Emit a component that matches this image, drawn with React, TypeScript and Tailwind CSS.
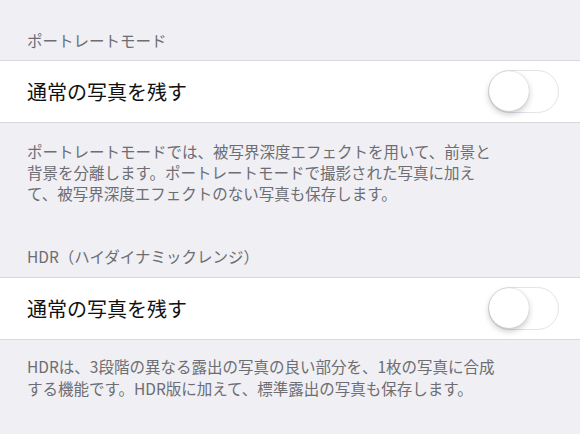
import React from "react";

function Toggle() {
  return (
    <div className="relative w-[71px] h-[43px] rounded-full border-[1.5px] border-[#e3e3e8] bg-white">
      <div className="absolute left-[0px] top-[0px] w-[40px] h-[40px] rounded-full bg-white shadow-[0_3px_6px_rgba(0,0,0,0.22),0_0_1px_rgba(0,0,0,0.25)]" />
    </div>
  );
}

function Cell({ label }: { label: string }) {
  return (
    <div className="h-[63px] bg-white border-y border-[#d8d8dd] flex items-center justify-between pl-[27px] pr-[21px]">
      <span className="text-[20px] leading-[26px] text-[#111]">{label}</span>
      <Toggle />
    </div>
  );
}

export default function App() {
  return (
    <div className="w-[580px] h-[434px] overflow-hidden bg-[#efeff4] font-['Noto_Sans_CJK_JP','Noto_Sans',sans-serif]">
      {/* Portrait mode */}
      <div className="h-[60px] flex items-end pb-[10px] px-[27px] text-[15.5px] leading-[20px] text-[#6d6d72]">
        ポートレートモード
      </div>
      <Cell label="通常の写真を残す" />
      <div className="pt-[18px] px-[27px] text-[15.5px] leading-[21px] text-[#6d6d72]">
        <p>ポートレートモードでは、被写界深度エフェクトを用いて、前景と</p>
        <p>背景を分離します。ポートレートモードで撮影された写真に加え</p>
        <p>て、被写界深度エフェクトのない写真も保存します。</p>
      </div>

      {/* HDR */}
      <div className="h-[73px] flex items-end pb-[11px] px-[27px] text-[15.5px] leading-[20px] text-[#6d6d72]">
        HDR（ハイダイナミックレンジ）
      </div>
      <Cell label="通常の写真を残す" />
      <div className="pt-[15px] px-[27px] text-[15.5px] leading-[22px] text-[#6d6d72]">
        <p>HDRは、3段階の異なる露出の写真の良い部分を、1枚の写真に合成</p>
        <p>する機能です。HDR版に加えて、標準露出の写真も保存します。</p>
      </div>
    </div>
  );
}
